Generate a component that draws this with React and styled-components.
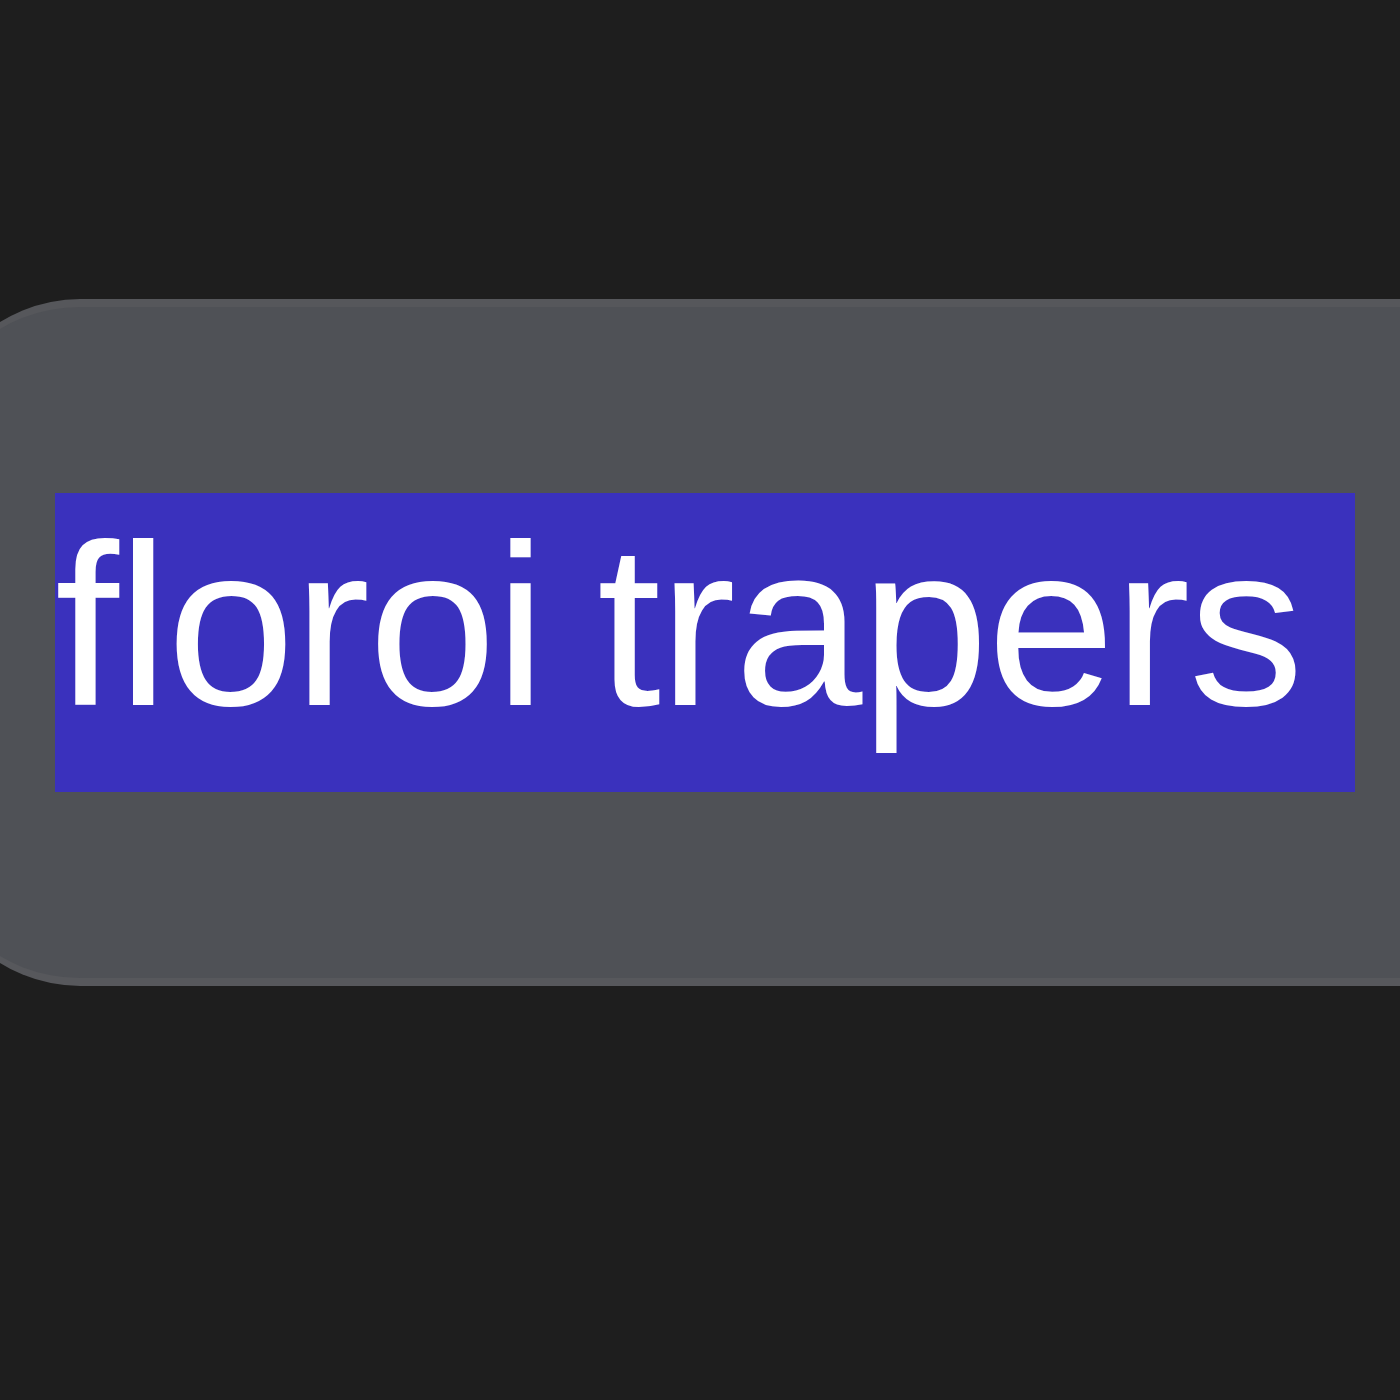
import React from 'react';
import styled, { createGlobalStyle } from 'styled-components';

const Global = createGlobalStyle`
    html, body {
        margin: 0;
        padding: 0;
        background: #1e1e1e;
    }
    #root {
        min-height: 1400px;
    }
`

const Stage = styled.main`
    height: 1400px;
    overflow: hidden;
    padding-top: 299px;
    box-sizing: border-box;
    background: #1e1e1e;
`

const Field = styled.div`
    display: flex;
    align-items: center;
    margin: 0 -300px 0 -70px;
    height: 687px;
    box-sizing: border-box;
    padding-left: 125px;
    background: #4f5156;
    border-top: 8px solid #56575b;
    border-bottom: 8px solid #57585c;
    border-radius: 150px;
`

const Selected = styled.span`
    display: inline-block;
    padding: 0 0 34px;
    background: #3a31bd;
    color: #ffffff;
    font-family: "Liberation Sans", Arial, sans-serif;
    font-size: 230px;
    letter-spacing: -1.5px;
    word-spacing: -10px;
    line-height: normal;
    white-space: pre;
`

export default function App() {
    return (
        <>
            <Global />
            <Stage>
                <Field>
                    <Selected>{'floroi trapers '}</Selected>
                </Field>
            </Stage>
        </>
    );
}
